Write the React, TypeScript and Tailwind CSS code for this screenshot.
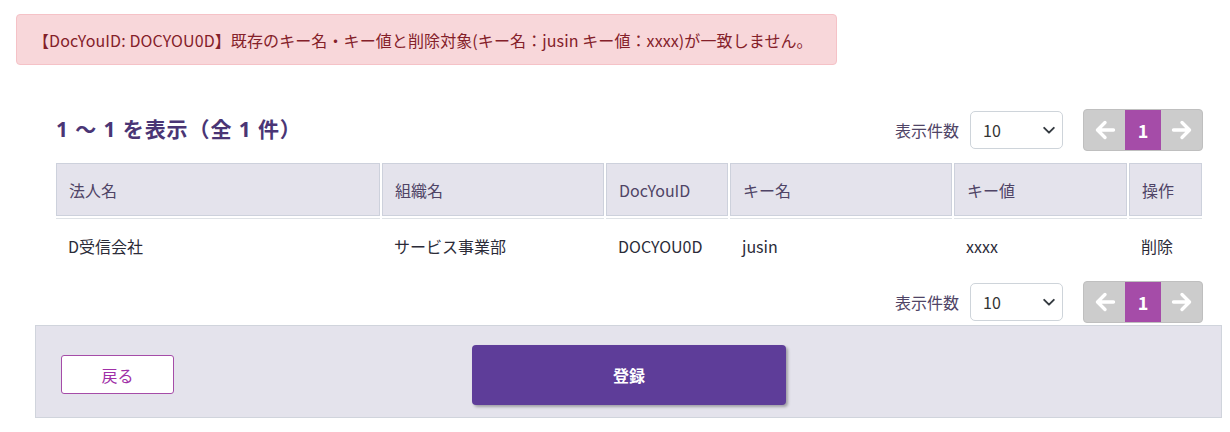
import React from "react";

const ArrowLeft = () => (
  <svg width="22" height="22" viewBox="0 0 22 22" fill="none">
    <path d="M19.5 11H4M11 3.5L3.5 11l7.5 7.5" stroke="white" strokeWidth="3.4" strokeLinecap="round" strokeLinejoin="round" />
  </svg>
);

const ArrowRight = () => (
  <svg width="22" height="22" viewBox="0 0 22 22" fill="none">
    <path d="M2.5 11H18M11 3.5l7.5 7.5-7.5 7.5" stroke="white" strokeWidth="3.4" strokeLinecap="round" strokeLinejoin="round" />
  </svg>
);

const Chevron = () => (
  <svg width="14" height="14" viewBox="0 0 16 16" fill="none">
    <path d="M2.5 5.5L8 11l5.5-5.5" stroke="#343a40" strokeWidth="2.2" strokeLinecap="round" strokeLinejoin="round" />
  </svg>
);

function Pager() {
  return (
    <div className="flex items-center justify-end h-[42px] pr-[1px]">
      <span className="text-[16px] text-[#4f4466] mr-[11px]">表示件数</span>
      <div className="w-[93px] h-[38px] border border-[#ced4da] rounded-[5px] bg-white flex items-center justify-between pl-[12px] pr-[6px]">
        <span className="text-[16px] text-[#333]">10</span>
        <Chevron />
      </div>
      <div className="ml-[20px] w-[120px] h-[42px] bg-[#cccccc] border border-[#bfbfbf] rounded-[4px] flex overflow-hidden">
        <div className="w-[41px] h-full flex items-center justify-center">
          <ArrowLeft />
        </div>
        <div className="w-[36px] h-full bg-[#a54ca8] flex items-center justify-center text-white font-bold text-[18px]">
          1
        </div>
        <div className="flex-1 h-full flex items-center justify-center">
          <ArrowRight />
        </div>
      </div>
    </div>
  );
}

export default function App() {
  const th = "bg-[#e4e3ec] border border-[#cdd1dc] text-left font-normal px-[12px] h-[53px] text-[#4f4466] text-[16px]";
  const td = "border-t border-[#dee2e6] px-[12px] h-[54px] text-[#2b2b38] text-[16px]";
  return (
    <div
      className="w-[1230px] h-[432px] bg-white overflow-hidden"
      style={{ fontFamily: '"Noto Sans CJK JP", "Noto Sans", sans-serif' }}
    >
      <div className="pt-[14px] pl-[16px]">
        <div className="w-[821px] h-[51px] border border-[#f5c2c7] bg-[#f8d7da] rounded-[4px] px-[16px] flex items-center text-[#842029] text-[16px] tracking-[0.1px]">
          【DocYouID: DOCYOU0D】既存のキー名・キー値と削除対象(キー名：jusin キー値：xxxx)が一致しません。
        </div>
      </div>

      <div className="ml-[54px] w-[1150px] mt-[44px]">
        <div className="flex items-center justify-between h-[42px]">
          <h2
            className="pl-[2px] text-[21px] font-bold text-[#4a3575] tracking-[0.9px]"
            style={{ fontFamily: '"Noto Sans", "Noto Sans CJK JP", sans-serif' }}
          >
            1 〜 1 を表示（全 1 件）
          </h2>
          <Pager />
        </div>

        <table className="mt-[10px] w-full table-fixed border-separate border-spacing-[2px]">
          <thead>
            <tr>
              <th className={`${th} w-[324px]`}>法人名</th>
              <th className={`${th} w-[222px]`}>組織名</th>
              <th className={`${th} w-[122px]`}>DocYouID</th>
              <th className={`${th} w-[222px]`}>キー名</th>
              <th className={`${th} w-[173px]`}>キー値</th>
              <th className={`${th} w-[73px]`}>操作</th>
            </tr>
          </thead>
          <tbody>
            <tr>
              <td className={td}>D受信会社</td>
              <td className={td}>サービス事業部</td>
              <td className={td}>DOCYOU0D</td>
              <td className={td}>jusin</td>
              <td className={td}>xxxx</td>
              <td className={td}>削除</td>
            </tr>
          </tbody>
        </table>

        <div className="mt-[7px]">
          <Pager />
        </div>
      </div>

      <div className="mt-[2px] ml-[35px] w-[1187px] h-[93px] bg-[#e4e3ec] border border-[#d0d4dc] flex items-center pt-[6px] pl-[25px]">
        <button className="w-[113px] h-[39px] bg-white border border-[#a54ca8] rounded-[3px] text-[#a030a8] text-[16px] flex items-center justify-center">
          戻る
        </button>
        <button className="ml-[298px] w-[314px] h-[60px] bg-[#5e3d99] rounded-[4px] text-white font-bold text-[16px] flex items-center justify-center shadow-[2px_2px_3px_rgba(0,0,0,0.3)]">
          登録
        </button>
      </div>
    </div>
  );
}
